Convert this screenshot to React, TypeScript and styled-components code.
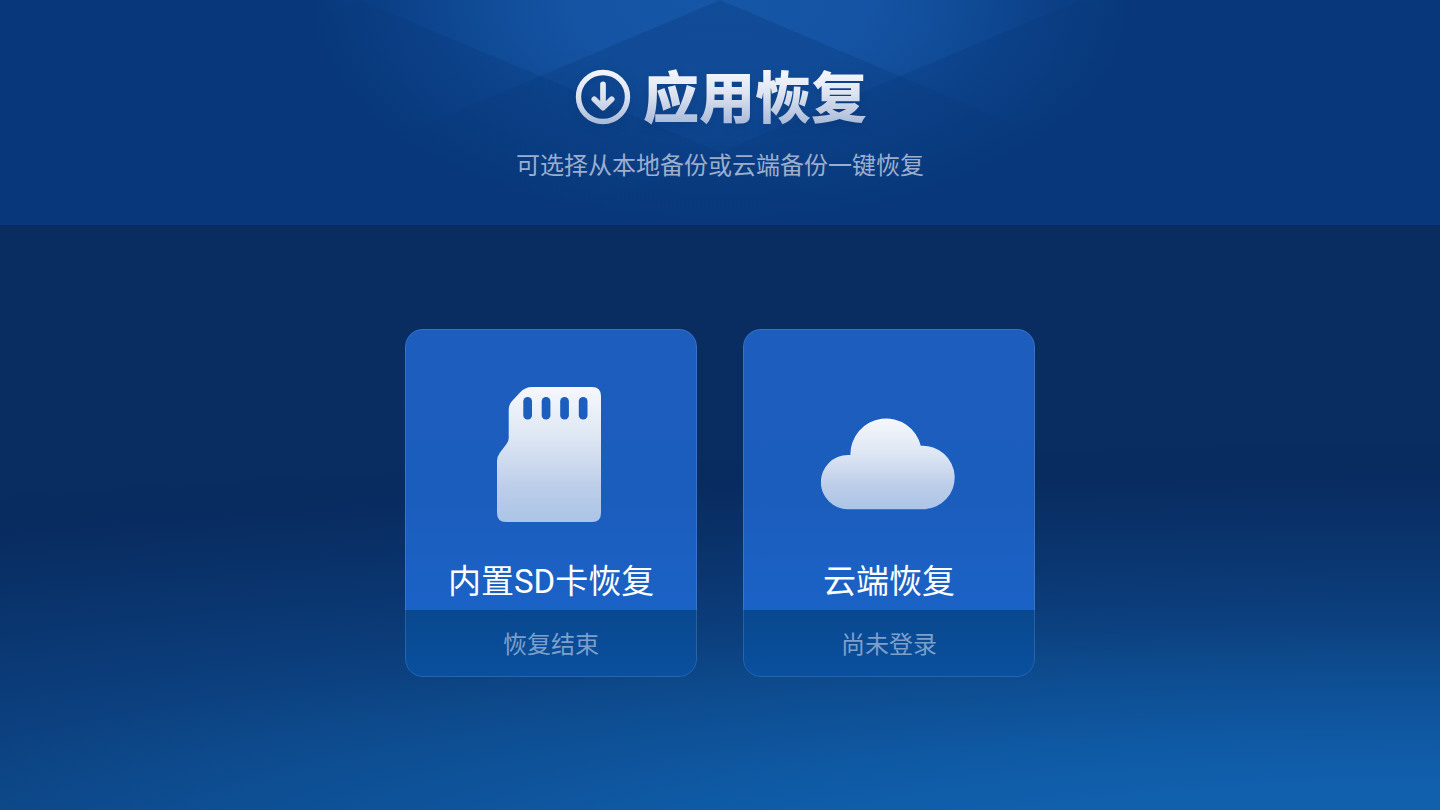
import React from "react";
import styled, { createGlobalStyle } from "styled-components";

const GlobalStyle = createGlobalStyle`
  *, *::before, *::after { box-sizing: border-box; }
  body {
    margin: 0;
    background: #092c60;
    font-family: Roboto, "Noto Sans CJK SC", sans-serif;
  }
`;

const Page = styled.div`
  display: flex;
  flex-direction: column;
  min-height: 100vh;
  background:
    radial-gradient(
      ellipse 195% 48% at 98% 105%,
      #1160ae 0%, #1160ae 16%, #0f5aa5 28%, #0e5197 40%, #0d498b 50%,
      #0c407f 59%, #0a3670 75%, #092f65 90%, #082b60 98%, #092d60 106%
    ) no-repeat,
    #092d60;
`;

const Header = styled.header`
  position: relative;
  display: flex;
  flex-direction: column;
  align-items: center;
  gap: 18px;
  height: 225px;
  padding-top: 63px;
  overflow: hidden;
  background:
    radial-gradient(ellipse 410px 220px at 50% 0, #1656a6 0%, #1554a4 36%, rgba(17, 78, 155, 0.85) 60%, rgba(14, 70, 144, 0.6) 80%, rgba(8, 56, 123, 0) 100%),
    #08387b;
`;

const Facets = styled.svg`
  position: absolute;
  top: 0;
  left: 50%;
  transform: translateX(-50%);
`;

const Heading = styled.div`
  position: relative;
  display: flex;
  align-items: center;
  gap: 14px;
  filter: drop-shadow(0 4px 4px rgba(4, 30, 80, 0.2));
`;

const Title = styled.h1`
  margin: 0;
  padding-bottom: 6px;
  font-family: "Noto Sans CJK SC", sans-serif;
  font-size: 56px;
  line-height: 62px;
  font-weight: 900;
  color: transparent;
  background: linear-gradient(180deg, #f4f6fc 12%, #dde4f0 45%, #a9bad8 90%);
  background-clip: text;
  -webkit-background-clip: text;
`;

const Subtitle = styled.p`
  position: relative;
  margin: 0;
  font-size: 24px;
  line-height: 34px;
  color: #9caecd;
`;

const Main = styled.main`
  display: flex;
  justify-content: center;
  align-items: flex-start;
  flex-wrap: wrap;
  gap: 46px;
  padding: 104px 24px 48px;
`;

const Card = styled.button`
  position: relative;
  display: flex;
  flex-direction: column;
  width: 292px;
  padding: 0;
  border: 0;
  border-radius: 18px;
  overflow: hidden;
  font: inherit;
  background: transparent;
  cursor: pointer;

  &::after {
    content: "";
    position: absolute;
    inset: 0;
    border: 1px solid rgba(255, 255, 255, 0.13);
    border-radius: inherit;
  }
`;

const CardBody = styled.span`
  display: flex;
  flex-direction: column;
  align-items: center;
  gap: 35px;
  width: 100%;
  height: 281px;
  padding-top: 58px;
  background: linear-gradient(180deg, #1c5dbd, #1b5dbd 60%, #1b62c6);
`;

const CardTitle = styled.span`
  font-size: 33px;
  line-height: 48px;
  color: #fff;
`;

const CardStatus = styled.span`
  width: 100%;
  padding: 18px 0 15px;
  font-size: 24px;
  line-height: 34px;
  text-align: center;
  color: #7c9fcb;
  background: linear-gradient(180deg, #09488e, #09509f);
`;

function DownloadIcon() {
  return (
    <svg width="56" height="56" viewBox="0 0 56 56" fill="none" overflow="visible" aria-hidden="true">
      <defs>
        <linearGradient id="ring" gradientUnits="userSpaceOnUse" x1="0" y1="0" x2="0" y2="56">
          <stop offset="0" stopColor="#f4f6fc" />
          <stop offset="0.5" stopColor="#dbe2ef" />
          <stop offset="1" stopColor="#a6b8d7" />
        </linearGradient>
      </defs>
      <g stroke="url(#ring)" strokeWidth="5.4">
        <circle cx="30" cy="28" r="24.5" />
        <path d="M30.02 15.3 30 38M21.300 30.300 30 38.700 38.700 30.300" strokeWidth="5.7" strokeLinecap="round" strokeLinejoin="round" />
      </g>
    </svg>
  );
}

function IconGradient({ id, from, to }: { id: string; from: number; to: number }) {
  return (
    <linearGradient id={id} gradientUnits="userSpaceOnUse" x1="0" y1={from} x2="0" y2={to}>
      <stop offset="0" stopColor="#f5f7fc" />
      <stop offset="0.35" stopColor="#e0e8f4" />
      <stop offset="0.75" stopColor="#bccde9" />
      <stop offset="1" stopColor="#abc5e7" />
    </linearGradient>
  );
}

function SdCardIcon() {
  return (
    <svg width="136" height="136" viewBox="0 0 136 136" aria-hidden="true">
      <defs><IconGradient id="sd" from={0} to={135} /></defs>
      <path
        fill="url(#sd)"
        d="M49 0H109Q118 0 118 9V126Q118 135 109 135H23Q14 135 14 126V74Q14 69.500 17 65.500L23.500 57Q25.700 54 25.700 51V23Q25.700 17.500 29.500 13.500L37 5.500Q42 0 49 0Z"
      />
      <g fill="#1c5dbd">
        <rect x="40.300" y="10" width="8.700" height="22.600" rx="4.300" />
        <rect x="58.700" y="10" width="8.700" height="22.600" rx="4.300" />
        <rect x="77.200" y="10" width="8.700" height="22.600" rx="4.300" />
        <rect x="95.800" y="10" width="8.700" height="22.600" rx="4.300" />
      </g>
    </svg>
  );
}

function CloudIcon() {
  return (
    <svg width="136" height="136" viewBox="0 0 136 136" aria-hidden="true">
      <defs><IconGradient id="cloud" from={32} to={122} /></defs>
      <path
        fill="url(#cloud)"
        d="M27 122.300A27 27 0 0 1 27 68H29.400A35.700 35.700 0 0 1 99.800 58.800A31.800 31.800 0 1 1 103.300 122.300Z"
      />
    </svg>
  );
}

const cards = [
  { title: "内置SD卡恢复", status: "恢复结束", Icon: SdCardIcon },
  { title: "云端恢复", status: "尚未登录", Icon: CloudIcon },
];

export default function App() {
  return (
    <Page>
      <GlobalStyle />
      <Header>
        <Facets width="1080" height="225" viewBox="0 0 1080 225" aria-hidden="true">
          <defs>
            <linearGradient id="facet" x1="0" y1="0" x2="0" y2="1">
              <stop offset="0" stopColor="#08387b" stopOpacity="0.34" />
              <stop offset="1" stopColor="#08387b" stopOpacity="0.3" />
            </linearGradient>
          </defs>
          <g fill="url(#facet)">
            <path d="M540 0 1072 225H8Z" />
            <path d="M180 0 712 225H-352Z" />
            <path d="M900 0 1432 225H368Z" />
          </g>
        </Facets>
        <Heading>
          <DownloadIcon />
          <Title>应用恢复</Title>
        </Heading>
        <Subtitle>可选择从本地备份或云端备份一键恢复</Subtitle>
      </Header>
      <Main>
        {cards.map(({ title, status, Icon }) => (
          <Card key={title} type="button">
            <CardBody>
              <Icon />
              <CardTitle>{title}</CardTitle>
            </CardBody>
            <CardStatus>{status}</CardStatus>
          </Card>
        ))}
      </Main>
    </Page>
  );
}
